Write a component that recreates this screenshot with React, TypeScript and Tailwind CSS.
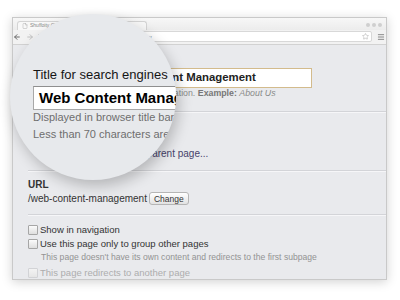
import { ArrowLeft, ArrowRight, RotateCw, Star, Menu, File } from "lucide-react";

function Divider() {
  return <div className="h-[2px] border-t border-b border-t-[#d3d4d8] border-b-[#f6f6f8]" />;
}

function Checkbox({ disabled }: { disabled?: boolean }) {
  return (
    <span
      className={
        disabled
          ? "h-[10px] w-[10px] shrink-0 rounded-[1px] border border-[#d2d3d6] bg-gradient-to-b from-[#f3f3f3] to-[#e6e6e6]"
          : "h-[10px] w-[10px] shrink-0 rounded-[1px] border border-[#a6a6a6] bg-gradient-to-b from-[#fbfbfb] to-[#dedede]"
      }
    />
  );
}

function BrowserWindow() {
  return (
    <div className="flex h-[263px] w-[375px] flex-col overflow-hidden border border-[#c9c9c9] bg-[#e9eaed] shadow-[0_2px_10px_rgba(0,0,0,0.18)]">
      {/* tab strip */}
      <div className="flex h-[12px] items-end bg-gradient-to-b from-[#f7f7f7] to-[#ececec] pl-[4px]">
        <div className="flex h-[9px] w-[130px] items-center gap-[2px] rounded-t-[3px] border border-b-0 border-[#d4d4d4] bg-[#f8f8f8] pl-[4px]">
          <File size={6} strokeWidth={1.5} className="text-[#999]" />
          <span className="text-[5px] leading-none text-[#888]">Shuffoity CMS: About Us</span>
        </div>
        <div className="mb-[3px] ml-auto mr-[4px] flex gap-[2px]">
          <span className="h-[4px] w-[4px] rounded-full bg-[#cfcfcf]" />
          <span className="h-[4px] w-[4px] rounded-full bg-[#cfcfcf]" />
          <span className="h-[4px] w-[4px] rounded-full bg-[#cfcfcf]" />
        </div>
      </div>
      {/* toolbar */}
      <div className="flex h-[16px] items-center border-b border-[#d2d2d2] bg-[#f2f2f2]">
        <ArrowLeft size={8} strokeWidth={3} className="text-[#6b6b6b]" />
        <ArrowRight size={8} strokeWidth={3} className="ml-[5px] text-[#c2c2c2]" />
        <RotateCw size={8} strokeWidth={3} className="ml-[3px] text-[#6b6b6b]" />
        <div className="ml-[3px] flex h-[11px] flex-1 items-center rounded-[2px] border border-[#d8d8d8] bg-white pl-[4px] pr-[2px]">
          <span className="text-[6px] leading-none text-[#777]">localhost/shuffoity/sitepage/Overview</span>
          <Star size={7} strokeWidth={1.5} className="ml-auto text-[#9a9a9a]" />
        </div>
        <Menu size={8} strokeWidth={2.5} className="ml-[5px] mr-[1px] text-[#777]" />
      </div>
      {/* page */}
      <div className="flex flex-col pl-[15px]">
        <div className="flex items-start pt-[23px]">
          <span className="w-[70px] pt-[4px] text-[10px] font-bold text-[#333]">Page name</span>
          <div className="flex flex-col">
            <div className="flex h-[20px] w-[214px] items-center border border-[#d3bb8c] bg-white pl-[14px] text-[11.4px] font-bold text-[#222]">
              Web Content Management
            </div>
            <span className="text-[8.8px] leading-[10px] text-[#8a8a8a]">
              Shown in site navigation. <b className="text-[#777]">Example:</b> <i>About Us</i>
            </span>
          </div>
        </div>
        <div className="mt-[13px]">
          <Divider />
        </div>
        <div className="flex h-[57px] items-end pb-[10px] pl-[88px] text-[10px] leading-[12px]">
          <span className="text-[#46426b]">Select parent page...</span>
        </div>
        <Divider />
        <div className="flex flex-col pb-[9px] pt-[7px] text-[10px] leading-[12px] text-[#333]">
          <span className="font-bold">URL</span>
          <div className="mt-[1px] flex h-[13px] items-center gap-[2px]">
            <span>/web-content-management</span>
            <span className="flex h-[13px] items-center rounded-[3px] border border-[#b5b5b5] bg-gradient-to-b from-white to-[#e2e2e2] px-[4px] text-[8.5px] text-[#333]">
              Change
            </span>
          </div>
        </div>
        <Divider />
        <div className="flex flex-col pt-[8px] text-[9.5px] leading-[12px] text-[#333]">
          <label className="flex h-[12px] items-center gap-[2px]">
            <Checkbox />
            <span>Show in navigation</span>
          </label>
          <label className="mt-[2px] flex h-[12px] items-center gap-[2px]">
            <Checkbox />
            <span>Use this page only to group other pages</span>
          </label>
          <span className="mt-[2px] pl-[13px] text-[8.6px] leading-[10px] text-[#939393]">
            This page doesn't have its own content and redirects to the first subpage
          </span>
          <label className="mt-[5px] flex h-[12px] items-center gap-[2px] text-[#adadad]">
            <Checkbox disabled />
            <span>This page redirects to another page</span>
          </label>
        </div>
      </div>
    </div>
  );
}

function Magnifier() {
  return (
    <div className="absolute left-[10px] top-[14px] h-[166px] w-[166px] overflow-hidden rounded-full bg-[#e7e9ec] shadow-[3px_6px_14px_rgba(0,0,0,0.22)]">
      <div className="flex flex-col whitespace-nowrap pl-[23px] pt-[53px]">
        <span className="text-[13px] leading-[16px] text-[#151515]">Title for search engines</span>
        <div className="mt-[3px] flex h-[24px] w-[260px] items-center border border-[#a8a8a8] border-t-[#8f8f8f] bg-white pl-[5px] text-[15px] font-bold text-black">
          Web Content Management
        </div>
        <span className="text-[11px] leading-[14px] text-[#6e6e6e]">Displayed in browser title bar</span>
        <span className="mt-[3px] text-[11px] leading-[14px] text-[#6e6e6e]">Less than 70 characters are recommended</span>
      </div>
    </div>
  );
}

export default function App() {
  return (
    <div className="relative h-[300px] w-[400px] overflow-hidden bg-white pl-[12px] pt-[17px] font-['Liberation_Sans',Arial,sans-serif]">
      <BrowserWindow />
      <Magnifier />
    </div>
  );
}
